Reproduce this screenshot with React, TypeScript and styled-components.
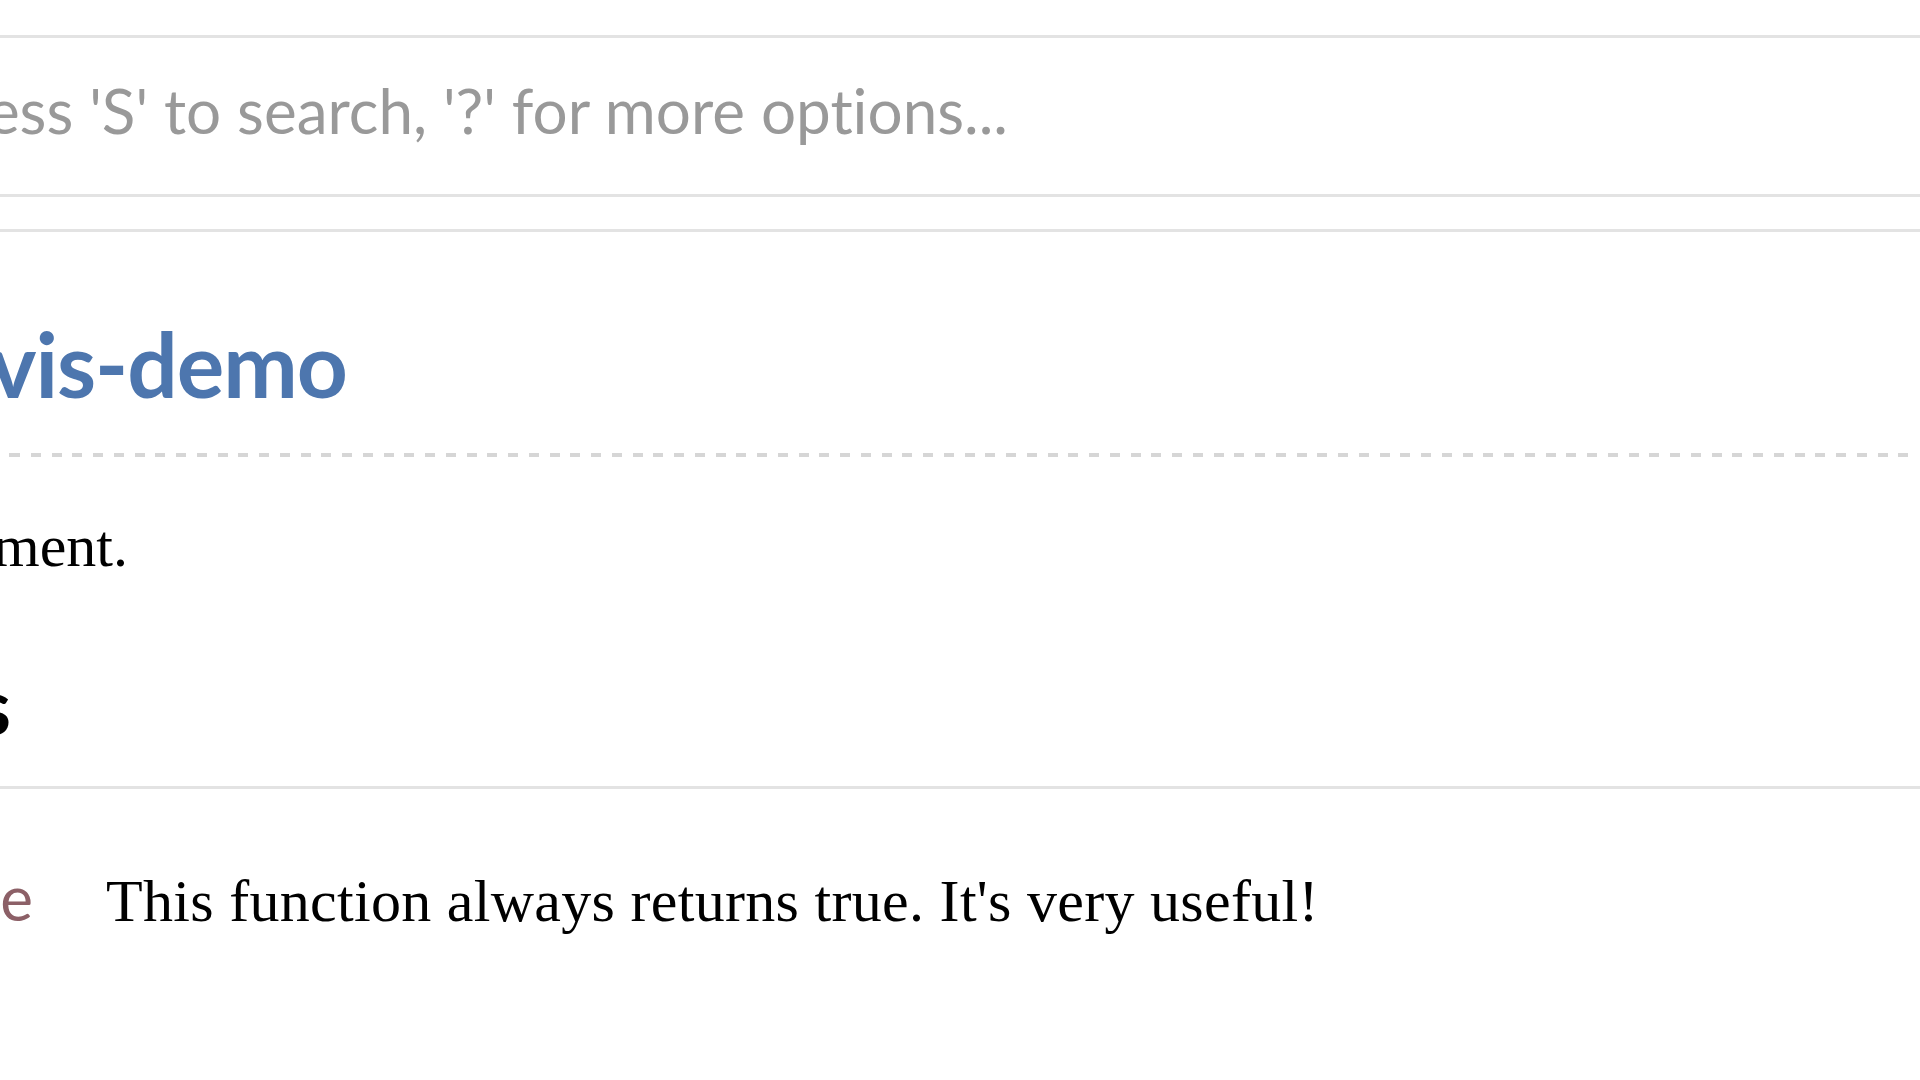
import React from "react";
import styled, { createGlobalStyle } from "styled-components";

const Global = createGlobalStyle`
  html, body { margin: 0; padding: 0; background: #ffffff; }
  body { overflow: hidden; }
`;

const Page = styled.main`
  width: 1920px;
  height: 1080px;
  overflow: hidden;
  box-sizing: border-box;
  padding-top: 35px;
  display: flex;
  flex-direction: column;
`;

const SearchBar = styled.div`
  border-top: 3px solid #e3e3e3;
  border-bottom: 3px solid #e3e3e3;
  height: 156px;
  display: flex;
  flex-direction: column;
`;

/* A run of text whose right end sits at $end px; the start of it runs off the left edge */
const Clip = styled.div<{ $end: number }>`
  display: flex;
  justify-content: flex-end;
  flex: none;
  width: ${(p) => p.$end}px;
  white-space: pre;
  font-variant-ligatures: none;
`;

const Placeholder = styled(Clip)`
  margin-top: 41px;
  font-family: Lato, "Noto Sans", sans-serif;
  font-size: 62px;
  line-height: 62px;
  color: #999999;
`;

const Content = styled.section`
  margin-top: 32px;
  border-top: 3px solid #e3e3e3;
  display: flex;
  flex-direction: column;
`;

const Title = styled.h1`
  margin: 0;
  padding: 87px 0 45px;
  font-family: Lato, "Noto Sans", sans-serif;
  font-weight: 700;
  font-size: 89px;
  line-height: 89px;
  letter-spacing: -1px;
  color: #4d76ae;
`;

const DashedRule = styled.div`
  height: 4px;
  background-image: repeating-linear-gradient(
    90deg,
    #d6d6d6 0 10px,
    transparent 10px 20.75px
  );
  background-position: 10px 0;
  margin-right: 10px;
`;

const DocText = styled(Clip)`
  margin-top: 59px;
  font-family: "Liberation Serif", "Times New Roman", serif;
  font-size: 60px;
  line-height: 60px;
  color: #000000;
`;

const SectionHeader = styled.h2`
  margin: 90px 0 0;
  padding-bottom: 42px;
  border-bottom: 3px solid #e3e3e3;
  font-family: Lato, "Noto Sans", sans-serif;
  font-weight: 700;
  font-size: 78px;
  line-height: 78px;
  color: #000000;
`;

const ItemRow = styled.div`
  margin-top: 78px;
  display: flex;
  align-items: baseline;
`;

const FnName = styled(Clip)`
  font-family: Lato, "Noto Sans", sans-serif;
  font-size: 62px;
  line-height: 60px;
  color: #8c6067;
`;

const ItemDesc = styled.div`
  margin-left: 73px;
  font-family: "Liberation Serif", "Times New Roman", serif;
  font-size: 60px;
  line-height: 60px;
  letter-spacing: 0.3px;
  color: #000000;
  white-space: nowrap;
`;

export default function App() {
  return (
    <>
      <Global />
      <Page>
        <SearchBar>
          <Placeholder $end={1008}>
            Click or press 'S' to search, '?' for more options...
          </Placeholder>
        </SearchBar>
        <Content>
          <Title>
            <Clip $end={347}>Crate travis-demo</Clip>
          </Title>
          <DashedRule />
          <DocText $end={128}>ment.</DocText>
          <SectionHeader>
            <Clip $end={11}>Functions</Clip>
          </SectionHeader>
          <ItemRow>
            <FnName $end={33}>always_true</FnName>
            <ItemDesc>This function always returns true. It's very useful!</ItemDesc>
          </ItemRow>
        </Content>
      </Page>
    </>
  );
}
